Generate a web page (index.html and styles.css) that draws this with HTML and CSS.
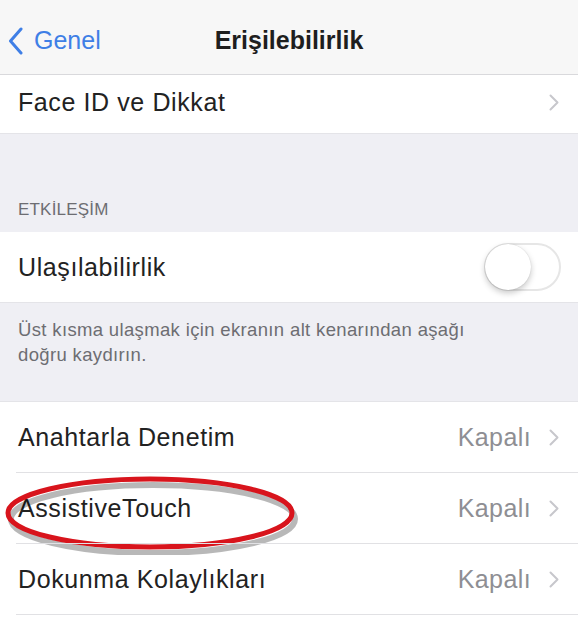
FILE: index.html
```html
<!DOCTYPE html>
<html lang="tr">
<head>
<meta charset="utf-8">
<title>Erişilebilirlik</title>
<link rel="stylesheet" href="styles.css">
</head>
<body>
<div class="screen">
  <header class="nav">
    <a class="back" href="#">
      <svg class="back-chevron" viewBox="0 0 15 28" width="15" height="28"><path d="M13 2 L2.5 14 L13 26" fill="none" stroke="#3f7fe6" stroke-width="3" stroke-linecap="round" stroke-linejoin="round"/></svg>
      <span>Genel</span>
    </a>
    <h1 class="title">Erişilebilirlik</h1>
    <span></span>
  </header>

  <section class="group">
    <div class="row row-short">
      <span class="label">Face ID ve Dikkat</span>
      <span class="accessory"><svg class="chev" viewBox="0 0 10 17" width="10" height="17"><path d="M1.5 1.5 L8.5 8.5 L1.5 15.5" fill="none" stroke="#c7c7cc" stroke-width="2" stroke-linecap="round" stroke-linejoin="round"/></svg></span>
    </div>
  </section>

  <div class="section-header">ETKİLEŞİM</div>

  <section class="group">
    <div class="row">
      <span class="label">Ulaşılabilirlik</span>
      <span class="toggle"><span class="knob"></span></span>
    </div>
  </section>

  <div class="section-footer">Üst kısma ulaşmak için ekranın alt kenarından aşağı doğru kaydırın.</div>

  <section class="group list">
    <div class="row">
      <span class="label">Anahtarla Denetim</span>
      <span class="accessory"><span class="value">Kapalı</span><svg class="chev" viewBox="0 0 10 17" width="10" height="17"><path d="M1.5 1.5 L8.5 8.5 L1.5 15.5" fill="none" stroke="#c7c7cc" stroke-width="2" stroke-linecap="round" stroke-linejoin="round"/></svg></span>
    </div>
    <div class="row marked">
      <span class="label">AssistiveTouch</span>
      <span class="accessory"><span class="value">Kapalı</span><svg class="chev" viewBox="0 0 10 17" width="10" height="17"><path d="M1.5 1.5 L8.5 8.5 L1.5 15.5" fill="none" stroke="#c7c7cc" stroke-width="2" stroke-linecap="round" stroke-linejoin="round"/></svg></span>
      <svg class="circle-mark" viewBox="0 0 300 84" width="300" height="84">
        <ellipse cx="148" cy="44" rx="142" ry="34" fill="none" stroke="rgba(0,0,0,0.28)" stroke-width="6" transform="translate(3,4)"/>
        <ellipse cx="148" cy="42" rx="142" ry="34" fill="none" stroke="#d8141c" stroke-width="5"/>
      </svg>
    </div>
    <div class="row">
      <span class="label">Dokunma Kolaylıkları</span>
      <span class="accessory"><span class="value">Kapalı</span><svg class="chev" viewBox="0 0 10 17" width="10" height="17"><path d="M1.5 1.5 L8.5 8.5 L1.5 15.5" fill="none" stroke="#c7c7cc" stroke-width="2" stroke-linecap="round" stroke-linejoin="round"/></svg></span>
    </div>
  </section>
</div>
</body>
</html>
```

FILE: styles.css
```css
* { box-sizing: border-box; }
html, body { margin: 0; padding: 0; background: #ffffff; }
body {
  font-family: "Liberation Sans", Arial, sans-serif;
  color: #222222;
  width: 578px;
  height: 618px;
  overflow: hidden;
}
.screen { display: flex; flex-direction: column; }

.nav {
  height: 75px;
  padding-top: 7px;
  background: #f7f7f7;
  border-bottom: 1px solid #d9d9dc;
  display: grid;
  grid-template-columns: 1fr auto 1fr;
  align-items: center;
}
.back {
  display: flex;
  align-items: center;
  gap: 11px;
  padding-left: 8px;
  color: #3f7fe6;
  text-decoration: none;
  font-size: 25px;
}
.back-chevron { display: block; }
.title {
  margin: 0;
  font-size: 25px;
  font-weight: bold;
  color: #1e1e1e;
}

.group { background: #ffffff; }
.row {
  position: relative;
  height: 70px;
  display: flex;
  align-items: center;
  justify-content: space-between;
  padding: 0 19px 0 18px;
  font-size: 25px;
  letter-spacing: 0.6px;
}
.row-short { height: 58px; padding-bottom: 4px; }
.list .row { height: 71px; }
.list .row::after {
  content: "";
  position: absolute;
  left: 16px;
  right: 0;
  bottom: 0;
  height: 1px;
  background: #e1e1e4;
}
.accessory {
  display: flex;
  align-items: center;
  gap: 18px;
}
.value { color: #8e8e93; letter-spacing: 0.4px; }
.chev { display: block; }

.section-header {
  background: #efeff4;
  height: 99px;
  display: flex;
  align-items: flex-end;
  padding: 0 18px 12px;
  font-size: 17px;
  color: #6d6d72;
  letter-spacing: 0.2px;
  border-top: 1px solid #e4e4e8;
}
.section-footer {
  background: #efeff4;
  height: 100px;
  padding: 14px 90px 0 18px;
  font-size: 18.5px;
  letter-spacing: 0.35px;
  line-height: 25px;
  color: #6d6d72;
  border-top: 1px solid #e4e4e8;
  border-bottom: 1px solid #e4e4e8;
}

.toggle {
  width: 77px;
  height: 48px;
  border-radius: 24px;
  border: 2px solid #e6e6e6;
  background: #ffffff;
  position: relative;
  margin-right: -2px;
}
.knob {
  position: absolute;
  left: -1px;
  top: -1px;
  width: 46px;
  height: 46px;
  border-radius: 50%;
  background: #ffffff;
  box-shadow: 0 3px 6px rgba(0,0,0,0.22), 0 0 1px rgba(0,0,0,0.2);
}

.circle-mark {
  position: absolute;
  left: 2px;
  top: -2px;
  pointer-events: none;
}
```
